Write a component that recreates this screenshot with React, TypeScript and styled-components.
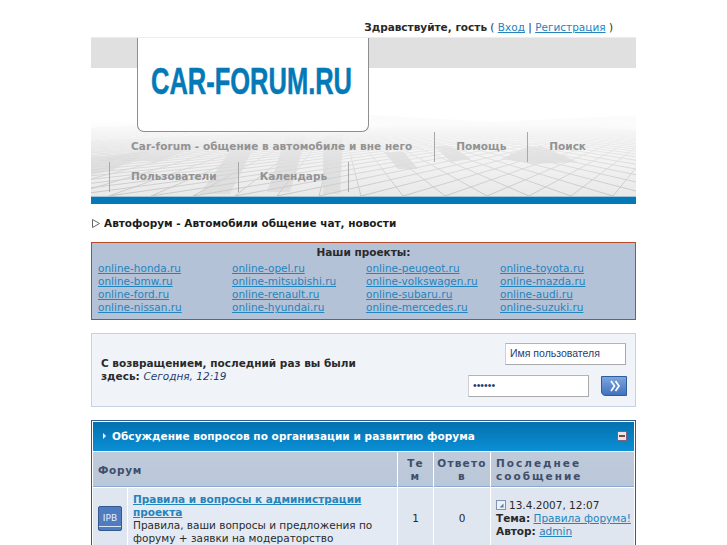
import styled, { createGlobalStyle } from "styled-components";

const GlobalStyle = createGlobalStyle`
  html, body {
    margin: 0;
    padding: 0;
    background: #fff;
    overflow: hidden;
  }
  body {
    font-family: "DejaVu Sans", Verdana, sans-serif;
    font-size: 10.5px;
    color: #2a2a2a;
  }
`;

const Page = styled.div`
  width: 545px;
  height: 545px;
  margin: 0 auto;
  overflow: hidden;
`;
const Welcome = styled.div`
  height: 37px;
  box-sizing: border-box;
  padding: 20px 23px 0 0;
  line-height: 14px;
  text-align: right;
`;
const Link = styled.a`
  color: #2484bc;
  text-decoration: underline;
`;
const Header = styled.header`
  position: relative;
  border-top: 1px solid #ececec;
  background: linear-gradient(#e0e0e0, #e0e0e0) top / 100% 30px no-repeat;
`;
const Floor = styled.svg`
  position: absolute;
  left: 0;
  bottom: 0;
  width: 545px;
  height: 87px;
`;
const LogoBox = styled.div`
  position: relative;
  width: 232px;
  height: 94px;
  box-sizing: border-box;
  margin-left: 46px;
  background: #fff;
  border: 1px solid #8e8e8e;
  border-top: 0;
  border-radius: 0 0 7px 7px;
  svg {
    display: block;
  }
`;
const Nav = styled.nav`
  position: relative;
  display: flex;
  flex-wrap: wrap;
  padding: 0 0 4px 18px;
`;
const NavItem = styled.a<{ $first?: boolean; $last?: boolean }>`
  box-sizing: border-box;
  height: 30px;
  line-height: 29px;
  padding: 0 ${(p) => (p.$first ? "22px" : "21px")} 0 21px;
  border-left: 1px solid ${(p) => (p.$first ? "transparent" : "#a8a8a8")};
  border-right: ${(p) => (p.$last ? "1px solid #a8a8a8" : "0")};
  font-weight: bold;
  letter-spacing: ${(p) => (p.$first ? "0.05px" : "0")};
  color: #939393;
`;
const BlueBar = styled.div`
  height: 7px;
  border-top: 1px solid #a6c3d6;
  background: #0479b7;
`;
const PageTitle = styled.h1`
  display: flex;
  align-items: center;
  gap: 4px;
  margin: 12px 0 12px 1px;
  height: 14px;
  font-size: 10.5px;
  line-height: 14px;
  color: #1c1c1c;
`;
const Projects = styled.div`
  box-sizing: border-box;
  height: 78px;
  border: 1px solid #b5492a;
  background: #b4c2d8;
  padding: 2px 6px 0;
`;
const ProjectsTitle = styled.div`
  height: 16px;
  line-height: 14px;
  text-align: center;
  font-weight: bold;
  margin-bottom: 1px;
`;
const ProjectGrid = styled.div`
  display: grid;
  grid-template-columns: repeat(4, 134px);
  grid-auto-rows: 13px;
  line-height: 13px;
`;
const LoginBox = styled.div`
  box-sizing: border-box;
  display: flex;
  justify-content: space-between;
  align-items: center;
  height: 74px;
  margin-top: 13px;
  border: 1px solid #c4d2e4;
  background: #f0f4f9;
  padding: 0 8px 0 9px;
`;
const LoginText = styled.div`
  width: 270px;
  line-height: 13px;
  font-weight: bold;
  em {
    font-weight: normal;
    color: #1f3d75;
  }
`;
const LoginForm = styled.div`
  display: flex;
  flex-direction: column;
  align-items: flex-end;
  gap: 10px;
`;
const NameRow = styled.div`
  margin-right: 1px;
`;
const FormRow = styled.div`
  display: flex;
  align-items: center;
  gap: 12px;
`;
const Field = styled.div`
  box-sizing: border-box;
  width: 121px;
  height: 22px;
  padding: 0 4px;
  line-height: 19px;
  font-family: "Liberation Sans", Arial, sans-serif;
  font-size: 10.5px;
  color: #1f3d75;
  background: #fff;
  border: 1px solid #a9a9a9;
  border-top-color: #b4b4b4;
  border-left-color: #cfcfcf;
`;
const ForumBox = styled.div`
  margin-top: 13px;
  border: 1px solid #34598f;
  background: #fff;
`;
const ForumHead = styled.div`
  display: flex;
  align-items: center;
  justify-content: space-between;
  box-sizing: border-box;
  height: 29px;
  margin: 1px 1px 0;
  padding: 0 7px 1px 10px;
  background: linear-gradient(#0470ae, #0a8fd5);
  color: #fff;
  font-weight: bold;
`;
const ForumTitle = styled.div`
  display: flex;
  align-items: center;
  gap: 6px;
  letter-spacing: 0.05px;
`;
const Table = styled.table`
  width: 100%;
  table-layout: fixed;
  border-collapse: separate;
  border-spacing: 1px;
  margin: 0;
  background: #fff;
  col:nth-child(1) {
    width: 34px;
  }
  col:nth-child(3) {
    width: 35px;
  }
  col:nth-child(4) {
    width: 56px;
  }
  col:nth-child(5) {
    width: 143px;
  }
`;
const Th = styled.th<{ $center?: boolean }>`
  height: 35px;
  padding: 2px ${(p) => (p.$center ? "0" : "5px")} 0;
  box-sizing: border-box;
  background: linear-gradient(#bfcbdb, #bac7d8);
  border-bottom: 1px solid #8ba8d0;
  color: #3f4f6b;
  font-size: 10.5px;
  line-height: 13px;
  letter-spacing: ${(p) => (p.$center ? "1.2px" : "2px")};
  text-align: ${(p) => (p.$center ? "center" : "left")};
`;
const ForumTh = styled(Th)`
  letter-spacing: 0.7px;
`;
const Td = styled.td<{ $center?: boolean; $alt?: boolean }>`
  background: ${(p) => (p.$alt ? "#dfe6f0" : "#e4eaf3")};
  padding: 5px;
  line-height: 13px;
  vertical-align: middle;
  text-align: ${(p) => (p.$center ? "center" : "left")};
`;
const LastPost = styled(Td)`
  padding-right: 0;
  white-space: nowrap;
`;
const ForumLink = styled(Link)`
  display: block;
  font-weight: bold;
`;
const Small = styled.div`
  line-height: 12.5px;
`;

const projects = [
  "online-honda.ru", "online-opel.ru", "online-peugeot.ru", "online-toyota.ru",
  "online-bmw.ru", "online-mitsubishi.ru", "online-volkswagen.ru", "online-mazda.ru",
  "online-ford.ru", "online-renault.ru", "online-subaru.ru", "online-audi.ru",
  "online-nissan.ru", "online-hyundai.ru", "online-mercedes.ru", "online-suzuki.ru",
];

const navItems = ["Car-forum - общение в автомобиле и вне него", "Помощь", "Поиск", "Пользователи", "Календарь"];

// blocks of the floor picture, in svg coordinates (page x - 91, page y - 110)
const floorBlocks = [
  "196,25 216,25 199,83 176,83",
  "232,25 252,25 249,85 232,85",
  "146,32 166,32 139,85 109,85",
  "66,37 106,37 70,52 6,52",
  "0,48 60,42 20,62 0,66",
  "343,37 360,37 380,50 360,53",
  "437,37 450,37 487,53 444,55 410,50",
  "293,43 313,43 327,60 307,60",
];

function FloorGrid() {
  const fanA: string[] = [];
  const fanB: string[] = [];
  // two fans of lines running to their vanishing points on the horizon
  for (let foot = -1200; foot <= 1700; foot += 42) {
    fanA.push(`M249 5 L${foot} 87`);
  }
  for (let foot = -1200; foot <= 588; foot += 42) {
    fanB.push(`M589 5 L${foot} 87`);
  }
  return (
    <Floor viewBox="0 0 545 87" aria-hidden="true">
      <defs>
        <linearGradient id="floorBg" x1="0" y1="0" x2="0" y2="1">
          <stop offset="0.1" stopColor="#fff" />
          <stop offset="0.4" stopColor="#f7f7f7" />
          <stop offset="1" stopColor="#e9e9e9" />
        </linearGradient>
        <linearGradient id="floorLine" gradientUnits="userSpaceOnUse" x1="0" y1="15" x2="0" y2="87">
          <stop offset="0" stopColor="#fbfbfb" />
          <stop offset="0.5" stopColor="#dfdfdf" />
          <stop offset="1" stopColor="#c6c6c6" />
        </linearGradient>
      </defs>
      <rect width="545" height="87" fill="url(#floorBg)" />
      {floorBlocks.map((pts) => (
        <polygon key={pts} points={pts} fill="#d6d6d6" opacity="0.6" />
      ))}
      <path d={fanA.join(" ")} stroke="url(#floorLine)" strokeWidth="1" fill="none" />
      <path d={fanB.join(" ")} stroke="url(#floorLine)" strokeWidth="1" fill="none" />
    </Floor>
  );
}

function Logo() {
  return (
    <svg width="230" height="93" viewBox="0 0 230 93" role="img">
      <text
        transform="translate(13 56) scale(0.708 1)"
        fontFamily="Liberation Sans, Arial, sans-serif"
        fontWeight="bold"
        fontSize="36"
        fill="#0479b7"
        stroke="#0479b7"
        strokeWidth="0.5"
      >
        CAR-FORUM.RU
      </text>
    </svg>
  );
}

function LoginButton() {
  return (
    <svg width="26" height="20" viewBox="0 0 26 20">
      <defs>
        <linearGradient id="btnFill" x1="0" y1="0" x2="0" y2="1">
          <stop offset="0" stopColor="#7fa6de" />
          <stop offset="1" stopColor="#3f71bd" />
        </linearGradient>
      </defs>
      <path d="M.5 .5 H25.5 V19.5 H5 Q.5 19.5 .5 15 Z" fill="url(#btnFill)" stroke="#2f5c9d" />
      <path d="M10 5 L13.5 10 L10 15 M14.5 5 L18 10 L14.5 15" fill="none" stroke="#fff" strokeWidth="1.7" />
    </svg>
  );
}

function ForumIcon() {
  return (
    <svg width="24" height="25" viewBox="0 0 24 25" style={{ display: "block" }}>
      <rect x=".5" y=".5" width="23" height="24" rx="1.5" fill="#4f7cc0" stroke="#34598f" />
      <rect x="1" y="20" width="22" height="1" fill="#dbe6f5" />
      <text x="12" y="15" textAnchor="middle" fontSize="9" fontFamily="DejaVu Sans, sans-serif" fill="#eaf1fb">
        IPB
      </text>
    </svg>
  );
}

function PostIcon() {
  return (
    <svg width="10" height="10" viewBox="0 0 10 10" style={{ marginRight: 3, verticalAlign: -1 }}>
      <rect x=".5" y=".5" width="9" height="9" fill="#eef2f8" stroke="#7f93b5" />
      <path d="M7.5 3.5 V7.5 H3.5 Z" fill="#5a7cad" />
    </svg>
  );
}

function CollapseIcon() {
  return (
    <svg width="10" height="10" viewBox="0 0 10 10">
      <rect x=".5" y=".5" width="9" height="9" fill="#efe4e4" stroke="#80607a" />
      <rect x="2" y="4" width="6" height="2" fill="#7a4a4a" />
    </svg>
  );
}

function App() {
  return (
    <Page>
      <GlobalStyle />
      <Welcome>
        <b>Здравствуйте, гость</b> ( <Link>Вход</Link> | <Link>Регистрация</Link> )
      </Welcome>
      <Header>
        <FloorGrid />
        <LogoBox>
          <Logo />
        </LogoBox>
        <Nav>
          {navItems.map((item, i) => (
            <NavItem key={item} $first={i === 0} $last={i === navItems.length - 1}>
              {item}
            </NavItem>
          ))}
        </Nav>
      </Header>
      <BlueBar />
      <PageTitle>
        <svg width="8" height="9" viewBox="0 0 8 9">
          <path d="M.5 .5 L7.5 4.5 L.5 8.5 Z" fill="#fff" stroke="#666" />
        </svg>
        Автофорум - Автомобили общение чат, новости
      </PageTitle>
      <Projects>
        <ProjectsTitle>Наши проекты:</ProjectsTitle>
        <ProjectGrid>
          {projects.map((p) => (
            <div key={p}>
              <Link>{p}</Link>
            </div>
          ))}
        </ProjectGrid>
      </Projects>
      <LoginBox>
        <LoginText>
          С возвращением, последний раз вы были здесь: <em>Сегодня, 12:19</em>
        </LoginText>
        <LoginForm>
          <NameRow>
            <Field>Имя пользователя</Field>
          </NameRow>
          <FormRow>
            <Field>••••••</Field>
            <LoginButton />
          </FormRow>
        </LoginForm>
      </LoginBox>
      <ForumBox>
        <ForumHead>
          <ForumTitle>
            <svg width="3" height="6" viewBox="0 0 3 6">
              <path d="M0 0 L3 3 L0 6 Z" fill="#fff" />
            </svg>
            Обсуждение вопросов по организации и развитию форума
          </ForumTitle>
          <CollapseIcon />
        </ForumHead>
        <Table>
          <colgroup>
            <col />
            <col />
            <col />
            <col />
            <col />
          </colgroup>
          <thead>
            <tr>
              <ForumTh colSpan={2}>Форум</ForumTh>
              <Th $center>
                Те
                <br />м
              </Th>
              <Th $center>
                Ответо
                <br />в
              </Th>
              <Th>Последнее сообщение</Th>
            </tr>
          </thead>
          <tbody>
            <tr>
              <Td $alt>
                <ForumIcon />
              </Td>
              <Td>
                <ForumLink>Правила и вопросы к администрации проекта</ForumLink>
                <Small>Правила, ваши вопросы и предложения по форуму + заявки на модераторство</Small>
              </Td>
              <Td $center $alt>1</Td>
              <Td $center $alt>0</Td>
              <LastPost $alt>
                <PostIcon />
                13.4.2007, 12:07
                <br />
                <b>Тема:</b> <Link>Правила форума!</Link>
                <br />
                <b>Автор:</b> <Link>admin</Link>
              </LastPost>
            </tr>
          </tbody>
        </Table>
      </ForumBox>
    </Page>
  );
}

export default App;
